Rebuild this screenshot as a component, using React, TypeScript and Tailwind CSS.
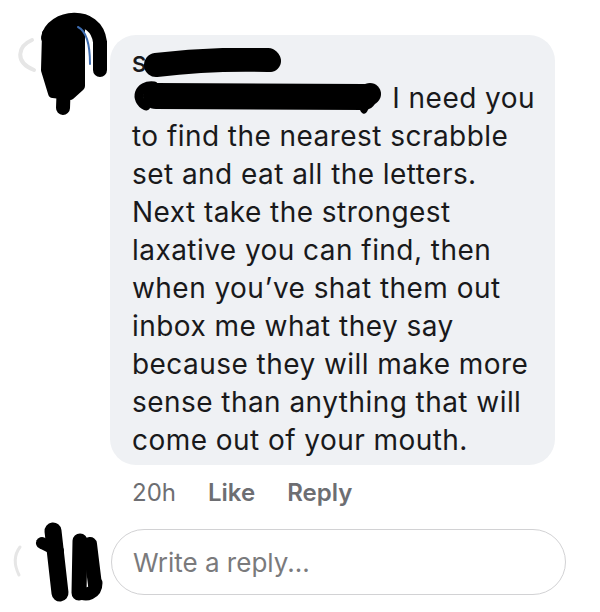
import React from 'react';

const lines = [
  'to find the nearest scrabble',
  'set and eat all the letters.',
  'Next take the strongest',
  'laxative you can find, then',
  'when you\u2019ve shat them out',
  'inbox me what they say',
  'because they will make more',
  'sense than anything that will',
  'come out of your mouth.',
];

function TopAvatar() {
  return (
    <svg width="110" height="120" viewBox="0 0 110 120" className="block">
      <path d="M32 40 C18 46, 14 62, 34 70" stroke="#e6e6e6" strokeWidth="4" fill="none" strokeLinecap="round" />
      <path d="M48 38 C52 16, 96 10, 100 42 L100 70" stroke="#000" strokeWidth="14" fill="none" strokeLinecap="round" />
      <path d="M47 34 L80 30 L80 86 L70 95 L53 93 L46 70 Z" fill="#000" stroke="#000" strokeWidth="10" strokeLinejoin="round" />
      <path d="M64 80 L63 108" stroke="#000" strokeWidth="14" fill="none" strokeLinecap="round" />
      <path d="M78 27 C86 31, 90 43, 90 64" stroke="#3d6cb0" strokeWidth="2" fill="none" strokeLinecap="round" />
    </svg>
  );
}

function BottomAvatar() {
  return (
    <svg width="110" height="90" viewBox="0 0 110 90" className="block">
      <path d="M20 28 C14 36, 14 46, 19 56" stroke="#e6e6e6" strokeWidth="3" fill="none" strokeLinecap="round" />
      <path d="M53 12 L60 74" stroke="#000" strokeWidth="17" fill="none" strokeLinecap="round" />
      <path d="M42 24 L58 32" stroke="#000" strokeWidth="12" fill="none" strokeLinecap="round" />
      <path d="M80 22 L79 74" stroke="#000" strokeWidth="15" fill="none" strokeLinecap="round" />
      <path d="M90 25 L95 66" stroke="#000" strokeWidth="14" fill="none" strokeLinecap="round" />
      <path d="M79 72 C86 78, 96 74, 96 64" stroke="#000" strokeWidth="13" fill="none" strokeLinecap="round" />
    </svg>
  );
}

function NameScribble() {
  return (
    <svg width="138" height="32" viewBox="0 0 138 32" className="block -ml-[2px]">
      <path d="M12 17 C45 13, 90 11, 124 12" stroke="#000" strokeWidth="24" fill="none" strokeLinecap="round" />
      <circle cx="126" cy="13" r="11" fill="#000" />
    </svg>
  );
}

function LineScribble() {
  return (
    <svg width="252" height="34" viewBox="0 0 252 34" className="inline-block align-[-6px]">
      <path d="M22 6 C6 4, 2 20, 14 26" stroke="#000" strokeWidth="9" fill="none" strokeLinecap="round" />
      <path d="M24 16 L232 17" stroke="#000" strokeWidth="26" fill="none" strokeLinecap="round" />
      <circle cx="238" cy="14" r="11" fill="#000" />
      <path d="M236 22 L232 30" stroke="#000" strokeWidth="7" fill="none" strokeLinecap="round" />
    </svg>
  );
}

export default function App() {
  return (
    <div className="w-[600px] h-[612px] bg-white overflow-hidden font-['Inter','Liberation_Sans',sans-serif]">
      <div className="flex items-start">
        <TopAvatar />
        <div className="pt-[35px]">
          <div className="w-[445px] rounded-[26px] bg-[#eff1f4] pt-[14px] pb-[6px] pl-[22px] text-[#19191b]">
            <div className="flex items-center h-[30px]">
              <span className="text-[22px] font-semibold leading-[30px]">S</span>
              <NameScribble />
            </div>
            <div className="text-[28px] leading-[38px] tracking-[0.45px] whitespace-nowrap">
              <div>
                <LineScribble /> I need you
              </div>
              {lines.map((l) => (
                <div key={l}>{l}</div>
              ))}
            </div>
          </div>
          <div className="mt-[13px] pl-[22px] flex items-center gap-[32px] text-[24px] leading-[30px] text-[#6d6e72]">
            <span>20h</span>
            <span className="font-semibold">Like</span>
            <span className="font-semibold">Reply</span>
          </div>
        </div>
      </div>
      <div className="flex items-start mt-[11px]">
        <BottomAvatar />
        <div className="mt-[10px] ml-[1px] w-[455px] h-[66px] rounded-full border-[1.5px] border-[#d2d2d4] flex items-center pl-[21px] text-[26px] text-[#7a7a7c]">
          Write a reply...
        </div>
      </div>
    </div>
  );
}
